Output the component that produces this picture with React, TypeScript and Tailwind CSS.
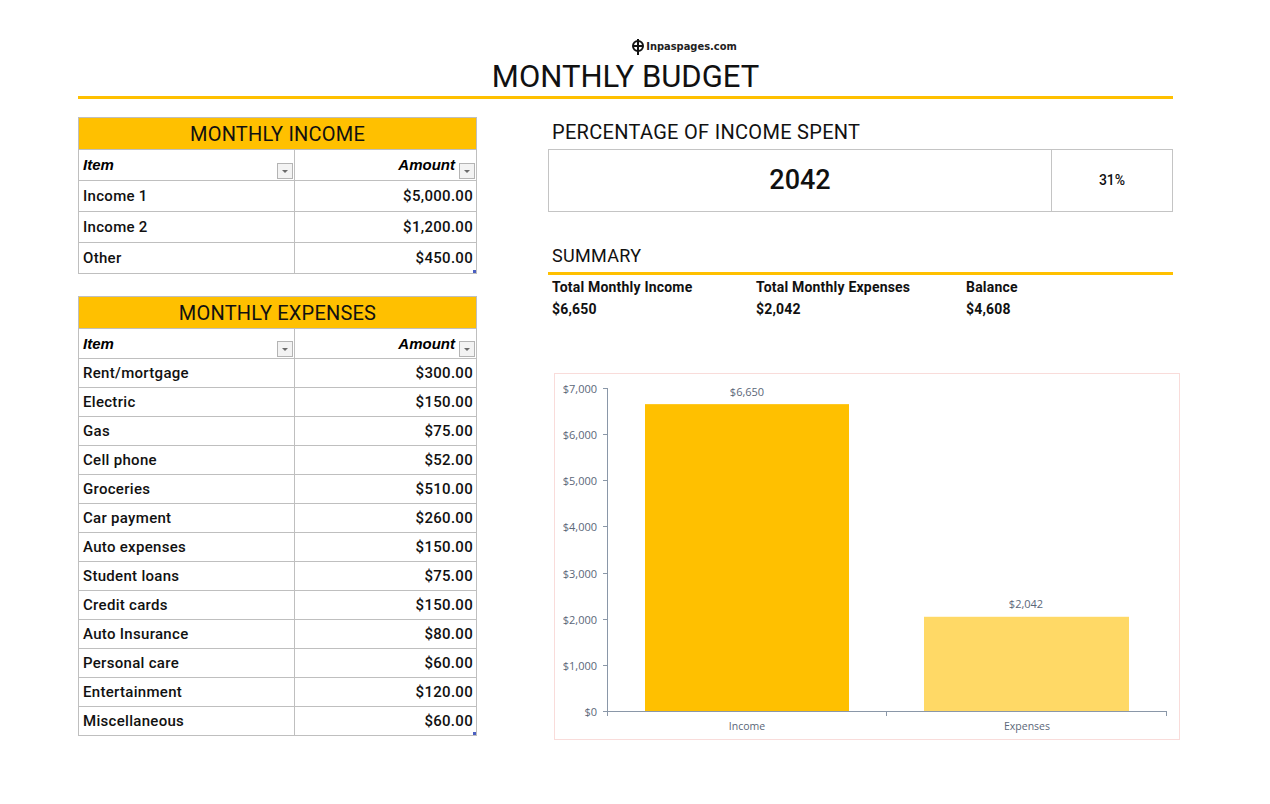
import React from 'react';

const income = [
  { item: 'Income 1', amount: '$5,000.00' },
  { item: 'Income 2', amount: '$1,200.00' },
  { item: 'Other', amount: '$450.00' },
];

const expenses = [
  { item: 'Rent/mortgage', amount: '$300.00' },
  { item: 'Electric', amount: '$150.00' },
  { item: 'Gas', amount: '$75.00' },
  { item: 'Cell phone', amount: '$52.00' },
  { item: 'Groceries', amount: '$510.00' },
  { item: 'Car payment', amount: '$260.00' },
  { item: 'Auto expenses', amount: '$150.00' },
  { item: 'Student loans', amount: '$75.00' },
  { item: 'Credit cards', amount: '$150.00' },
  { item: 'Auto Insurance', amount: '$80.00' },
  { item: 'Personal care', amount: '$60.00' },
  { item: 'Entertainment', amount: '$120.00' },
  { item: 'Miscellaneous', amount: '$60.00' },
];

const FilterButton = () => (
  <span className="w-[16px] h-[16px] border border-[#b4b4b4] bg-[#f3f3f3] flex items-center justify-center shrink-0">
    <svg width="8" height="5" viewBox="0 0 8 5">
      <path d="M1 1 L7 1 L4 4 Z" fill="#6b6b6b" />
    </svg>
  </span>
);

const Logo = () => (
  <div className="flex items-center justify-center pl-[117px] h-[16px] text-[11px] font-bold text-[#222]" style={{ fontFamily: '"DejaVu Sans Condensed", "DejaVu Sans", sans-serif' }}>
    <svg width="14" height="16" viewBox="0 0 14 16" className="mr-[1px]">
      <circle cx="7" cy="7" r="5" fill="none" stroke="#111" strokeWidth="2" />
      <line x1="7" y1="0" x2="7" y2="16" stroke="#111" strokeWidth="2" />
      <line x1="2" y1="7" x2="12" y2="7" stroke="#111" strokeWidth="2" />
    </svg>
    <span>Inpaspages.com</span>
  </div>
);

const BudgetTable = ({
  title,
  rows,
  rowH,
  headH,
}: {
  title: string;
  rows: { item: string; amount: string }[];
  rowH: string;
  headH: string;
}) => (
  <div className="w-[399px] border border-[#bfbfbf] relative">
    <div className="h-[31px] bg-[#ffc000] flex items-center justify-center text-[20px] text-[#111] tracking-[0.2px]">
      {title}
    </div>
    <div className={`flex ${headH} border-t border-[#bfbfbf]`}>
      <div className="w-[216px] border-r border-[#bfbfbf] flex items-center justify-between pl-[4px] pr-[1px] pt-[1px]">
        <span className="self-start mt-[3px] text-[15px] font-bold italic text-black" style={{ fontFamily: '"Liberation Sans", Arial, sans-serif' }}>Item</span>
        <span className="self-end mb-[1px]"><FilterButton /></span>
      </div>
      <div className="flex-1 flex items-center justify-end pr-[1px] gap-[4px]">
        <span className="self-start mt-[4px] text-[15px] font-bold italic text-black" style={{ fontFamily: '"Liberation Sans", Arial, sans-serif' }}>Amount</span>
        <span className="self-end mb-[1px]"><FilterButton /></span>
      </div>
    </div>
    {rows.map((r) => (
      <div key={r.item} className={`flex ${rowH} border-t border-[#bfbfbf] text-[15px] font-medium text-[#111]`}>
        <div className="w-[216px] border-r border-[#bfbfbf] flex items-center pl-[4px] tracking-[0.3px]">{r.item}</div>
        <div className="flex-1 flex items-center justify-end pr-[3px] tracking-[0.3px]">{r.amount}</div>
      </div>
    ))}
    <span className="absolute right-0 bottom-0 w-[3px] h-[3px] bg-[#4a5fc1]" />
  </div>
);

const Chart = () => {
  const y0 = 337;
  const per = (337 - 14) / 7000;
  const ticks = [0, 1000, 2000, 3000, 4000, 5000, 6000, 7000];
  const axis = '#8a97a8';
  const txt = '#5b6779';
  return (
    <div className="ml-[6px] w-[626px] h-[367px] border border-[#f9dcda] shrink-0">
      <svg width="624" height="365" viewBox="0 0 624 365" style={{ fontFamily: '"Open Sans", "Liberation Sans", sans-serif' }}>
        <line x1="52.5" y1="14" x2="52.5" y2={y0} stroke={axis} strokeWidth="1" />
        {ticks.map((t) => {
          const y = Math.round(y0 - t * per) + 0.5;
          return (
            <g key={t}>
              <line x1="48" y1={y} x2="53" y2={y} stroke={axis} strokeWidth="1" />
              <text x="42" y={y + 4} textAnchor="end" fontSize="11" fill={txt}>
                {t === 0 ? '$0' : `$${(t / 1000).toFixed(0)},000`}
              </text>
            </g>
          );
        })}
        <rect x="90" y={y0 - 6650 * per} width="204" height={6650 * per} fill="#ffc000" />
        <rect x="369" y={y0 - 2042 * per} width="205" height={2042 * per} fill="#ffd966" />
        <line x1="52" y1={y0 + 0.5} x2="612" y2={y0 + 0.5} stroke={axis} strokeWidth="1" />
        {[52.5, 331.5, 611.5].map((x) => (
          <line key={x} x1={x} y1={y0} x2={x} y2={y0 + 5} stroke={axis} strokeWidth="1" />
        ))}
        <text x="192" y="22" textAnchor="middle" fontSize="11" fill={txt}>$6,650</text>
        <text x="471" y="234" textAnchor="middle" fontSize="11" fill={txt}>$2,042</text>
        <text x="192" y="356" textAnchor="middle" fontSize="10.5" fill={txt}>Income</text>
        <text x="472" y="356" textAnchor="middle" fontSize="10.5" fill={txt}>Expenses</text>
      </svg>
    </div>
  );
};

export default function App() {
  return (
    <div className="w-[1270px] h-[804px] bg-white text-black overflow-hidden" style={{ fontFamily: 'Roboto, "Noto Sans", sans-serif' }}>
      <div className="ml-[78px] w-[1095px] pt-[39px]">
        <Logo />
        <h1 className="text-center text-[31px] leading-[38px] mt-[3px] text-[#111]">MONTHLY BUDGET</h1>
        <div className="h-[3px] bg-[#ffc000]" />
        <div className="flex mt-[18px]">
          <div className="flex flex-col gap-[22px]">
            <BudgetTable title="MONTHLY INCOME" rows={income} rowH="h-[31px]" headH="h-[31px]" />
            <BudgetTable title="MONTHLY EXPENSES" rows={expenses} rowH="h-[29px]" headH="h-[30px]" />
          </div>
          <div className="ml-[71px] w-[625px] flex flex-col">
            <div className="text-[20px] leading-[28px] pl-[4px] mt-[1px] text-[#111] tracking-[0.3px]">PERCENTAGE OF INCOME SPENT</div>
            <div className="mt-[3px] h-[63px] border border-[#c4c4c4] flex">
              <div className="w-[503px] border-r border-[#c4c4c4] flex items-center justify-center text-[27px] font-medium text-[#111]">2042</div>
              <div className="flex-1 flex items-center justify-center text-[14px] font-medium text-[#111]">31%</div>
            </div>
            <div className="text-[18px] leading-[24px] pl-[4px] mt-[32px] text-[#111] tracking-[0.3px]">SUMMARY</div>
            <div className="h-[3px] bg-[#ffc000] mt-[4px]" />
            <div className="flex pl-[4px] mt-[2px] text-[14px] font-bold text-[#111] tracking-[0.2px]">
              <div className="w-[204px] flex flex-col gap-[1px]">
                <span>Total Monthly Income</span>
                <span>$6,650</span>
              </div>
              <div className="w-[210px] flex flex-col gap-[1px]">
                <span>Total Monthly Expenses</span>
                <span>$2,042</span>
              </div>
              <div className="flex flex-col gap-[1px]">
                <span>Balance</span>
                <span>$4,608</span>
              </div>
            </div>
            <div className="mt-[53px]">
              <Chart />
            </div>
          </div>
        </div>
      </div>
    </div>
  );
}
